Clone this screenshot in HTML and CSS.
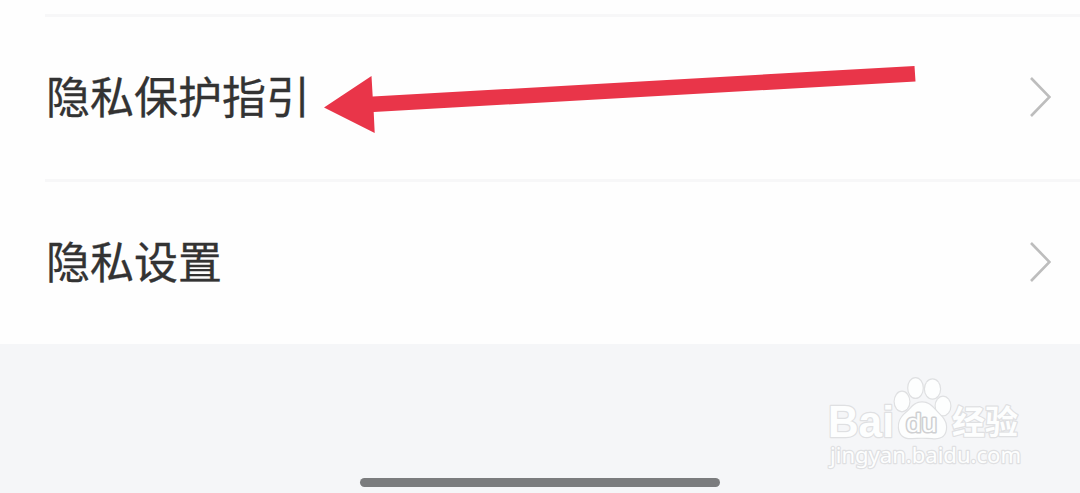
FILE: index.html
```
<!DOCTYPE html>
<html lang="zh-CN">
	<head>
		<meta charset="UTF-8"/>
		<meta name="viewport" content="width=device-width, initial-scale=1.0"/>
		<title>隐私</title>
		<link rel="stylesheet" href="styles.css">
	</head>
	<body>
		<main class="settings">
			<div class="row">
				<span class="label">隐私保护指引</span>
				<svg class="chevron" viewBox="0 0 21 40"><path d="M1 1 L19.5 20 L1 39"/></svg>
			</div>
			<div class="row">
				<span class="label">隐私设置</span>
				<svg class="chevron" viewBox="0 0 21 40"><path d="M1 1 L19.5 20 L1 39"/></svg>
			</div>
		</main>

		<footer class="bottom">
			<svg class="watermark" viewBox="0 0 220 110">
				<text class="logo" x="13" y="67" textLength="66" lengthAdjust="spacingAndGlyphs">Bai</text>
				<g class="paw">
					<ellipse cx="87" cy="31.5" rx="7.3" ry="9.7"/>
					<ellipse cx="100.5" cy="18" rx="7.2" ry="9.8"/>
					<ellipse cx="117.5" cy="19" rx="7.5" ry="9.5"/>
					<ellipse cx="128" cy="36" rx="7.3" ry="9.3"/>
					<path d="M107 32.5 C99 32.5 96 39 91 43 C86 47 83.5 52 84 58 C85 66 90 68.5 97 68 C104 67.5 110 67.5 117 68 C126 69 131 66 131 57 C131 51 127 47 123 43 C118 38 115 32.5 107 32.5 Z"/>
				</g>
				<text class="du" x="91" y="62" textLength="31" lengthAdjust="spacingAndGlyphs">du</text>
				<text class="cn" x="137" y="64" textLength="66">经验</text>
				<text class="url" x="15" y="93" textLength="191" lengthAdjust="spacingAndGlyphs">jingyan.baidu.com</text>
			</svg>
			<div class="home-bar"></div>
		</footer>

		<!-- pointer to the first row -->
		<svg class="arrow" viewBox="0 0 592 68">
			<polygon points="0,42.5 47.5,11 48.7,31.5 590.5,1 591.5,16.5 49.7,47 50.7,68"/>
		</svg>
	</body>
</html>
```

FILE: styles.css
```
body {
	margin: 0;
	height: 493px;
	position: relative;
	display: flex;
	flex-direction: column;
	overflow: hidden;
	background: #f5f6f8;
	font-family: "Noto Sans CJK SC", sans-serif;
}

.settings {
	height: 330px;
	padding-top: 14px;
	background: #fefefe;
}

.row {
	box-sizing: border-box;
	height: 165px;
	margin-left: 45px;
	padding: 0 29px 2px 1px;
	border-top: 3px solid #f7f7f8;
	display: flex;
	align-items: center;
	justify-content: space-between;
}

.label {
	padding-bottom: 5px;
	font-size: 44px;
	line-height: 60px;
	color: #333;
	-webkit-text-stroke: 0.3px #333;
}

.chevron {
	width: 21px;
	height: 40px;
	fill: none;
	stroke: #bdbdbd;
	stroke-width: 2.6;
}

.bottom {
	flex: 1;
	position: relative;
	display: flex;
	align-items: flex-end;
	justify-content: center;
}

.home-bar {
	width: 360px;
	height: 9px;
	margin-bottom: 6px;
	border-radius: 5px;
	background: #7b7c7e;
}

.watermark {
	position: absolute;
	left: 815px;
	top: 26px;
	width: 220px;
	height: 110px;
	fill: #fdfefe;
	stroke: #dfe0e2;
	stroke-width: 2.4;
	paint-order: stroke;
	stroke-linejoin: round;
}

.logo {
	font: bold 44px "Liberation Sans", sans-serif;
}

.du {
	font: 26px "Liberation Sans", sans-serif;
	stroke: #cfd0d2;
	stroke-width: 3;
}

.cn {
	font: bold 33px "Noto Sans CJK SC", sans-serif;
}

.url {
	font: 22px "Noto Sans", sans-serif;
}

.arrow {
	position: absolute;
	left: 324px;
	top: 65px;
	width: 592px;
	height: 68px;
	fill: #e93549;
}
```
